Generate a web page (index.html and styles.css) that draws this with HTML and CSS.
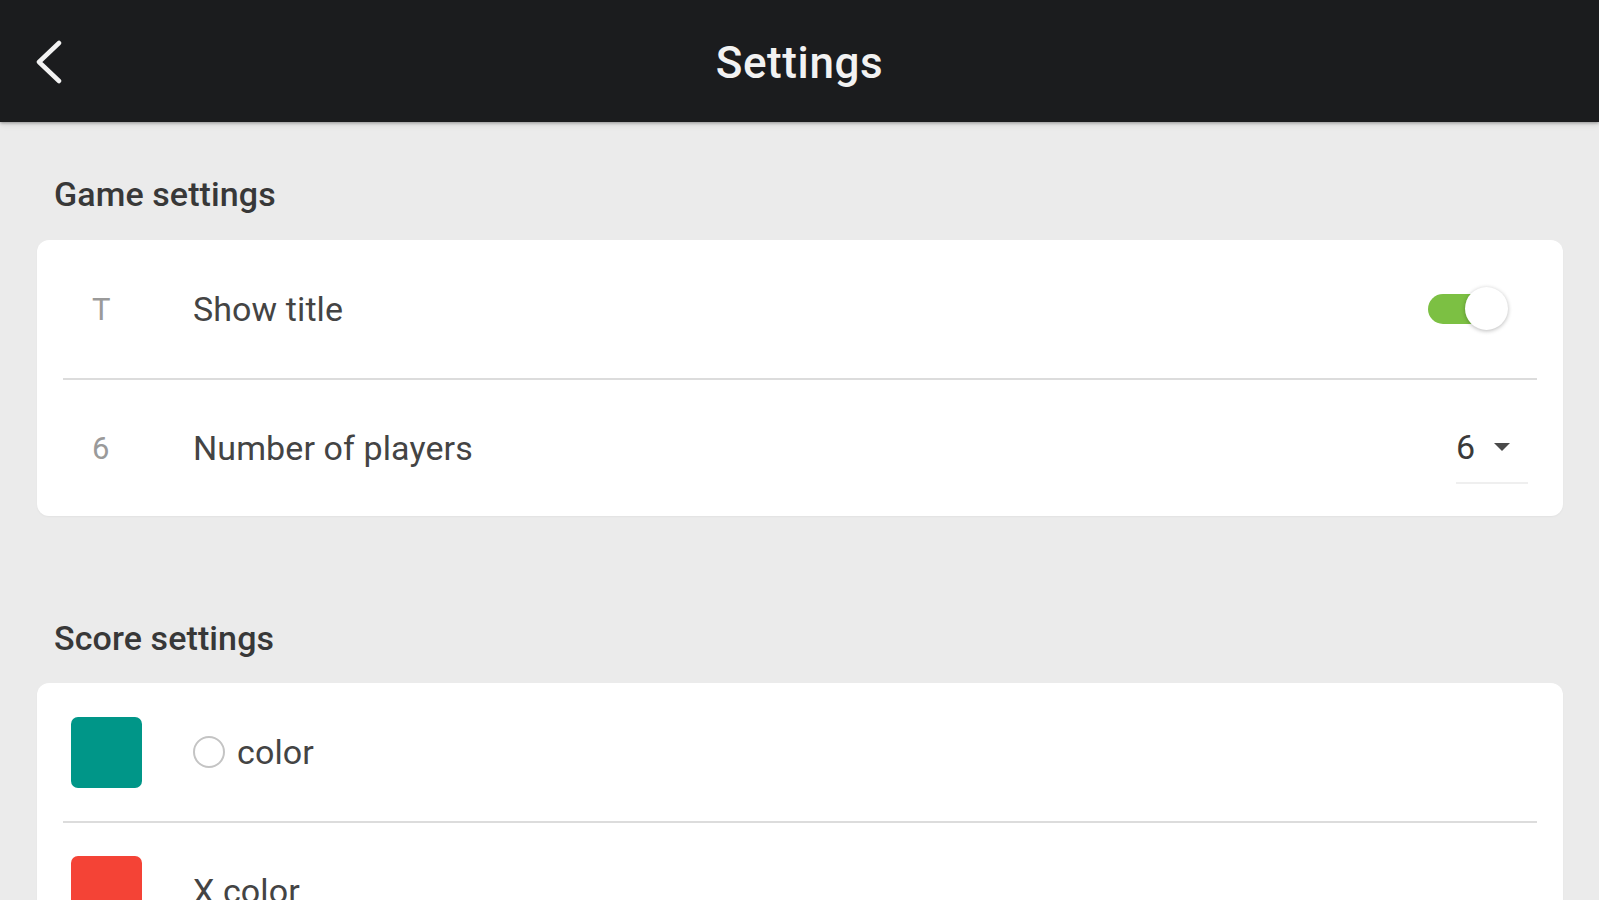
FILE: index.html
```html
<!DOCTYPE html>
<html lang="en">
<head>
<meta charset="utf-8">
<title>Settings</title>
<link rel="stylesheet" href="styles.css">
</head>
<body>
<header class="appbar">
  <div class="appbar-left">
    <svg class="back" width="30" height="44" viewBox="0 0 30 44" aria-hidden="true">
      <polyline points="25,3 5,22 25,41" fill="none" stroke="#f2f2f2" stroke-width="4.5" stroke-linecap="round" stroke-linejoin="round"/>
    </svg>
  </div>
  <h1 class="appbar-title">Settings</h1>
  <div class="appbar-right"></div>
</header>
<main class="content">
  <h2 class="section-title first">Game settings</h2>
  <div class="card">
    <div class="row">
      <div class="row-icon"><span class="icon-text">T</span></div>
      <div class="row-label">Show title</div>
      <div class="row-control">
        <div class="switch on"><div class="switch-track"></div><div class="switch-thumb"></div></div>
      </div>
    </div>
    <div class="row">
      <div class="row-icon"><span class="icon-text">6</span></div>
      <div class="row-label">Number of players</div>
      <div class="row-control">
        <div class="dropdown"><span class="dropdown-value">6</span><span class="dropdown-arrow"></span></div>
      </div>
    </div>
  </div>
  <h2 class="section-title">Score settings</h2>
  <div class="card">
    <div class="row">
      <div class="row-icon"><span class="swatch teal"></span></div>
      <div class="row-label"><span class="radio"></span>color</div>
    </div>
    <div class="row">
      <div class="row-icon"><span class="swatch red"></span></div>
      <div class="row-label">X color</div>
    </div>
  </div>
</main>
</body>
</html>
```

FILE: styles.css
```css
* { box-sizing: border-box; }
html, body {
  margin: 0;
  padding: 0;
  background: #ebebeb;
  font-family: Roboto, "Liberation Sans", Arial, sans-serif;
  overflow: hidden;
  height: 900px;
}
.appbar {
  height: 122px;
  background: #1b1c1e;
  display: grid;
  grid-template-columns: 1fr auto 1fr;
  align-items: center;
  box-shadow: 0 1px 3px rgba(0,0,0,0.35), 0 4px 6px rgba(0,0,0,0.06);
  position: relative;
  z-index: 1;
}
.appbar-left {
  padding-left: 34px;
  display: flex;
  align-items: center;
  padding-top: 2px;
}
.back { display: block; }
.appbar-title {
  margin: 0;
  color: #f2f2f2;
  font-size: 44px;
  font-weight: 500;
  letter-spacing: 0.6px;
  line-height: 1;
  padding-top: 4px;
}
.content {
  padding: 0 36px 0 37px;
}
.section-title {
  margin: 0;
  padding-left: 17px;
  font-size: 34px;
  font-weight: 500;
  color: #383838;
  line-height: 40px;
  margin-top: 102px;
  margin-bottom: 25px;
  letter-spacing: 0.1px;
}
.section-title.first {
  margin-top: 52px;
  margin-bottom: 26px;
}
.card {
  background: #fff;
  border-radius: 12px;
  padding: 0 26px;
  box-shadow: 0 1px 2px rgba(0,0,0,0.04);
}
.row {
  height: 138px;
  display: flex;
  align-items: center;
}
.row + .row {
  border-top: 2px solid #dcdcdc;
}
.row-icon {
  width: 130px;
  flex: none;
  display: flex;
  align-items: center;
}
.icon-text {
  padding-left: 29px;
  font-size: 31px;
  color: #9a9a9a;
}
.swatch {
  display: block;
  width: 71px;
  height: 71px;
  border-radius: 7px;
  margin-left: 8px;
}
.swatch.teal { background: #009688; }
.swatch.red { background: #f44336; }
.row-label {
  flex: 1;
  font-size: 34px;
  color: #444;
  display: flex;
  align-items: center;
  letter-spacing: 0.1px;
}
.radio {
  width: 32px;
  height: 32px;
  border: 2px solid #c4c4c4;
  border-radius: 50%;
  margin-right: 12px;
  flex: none;
}
.row-control {
  flex: none;
  display: flex;
  align-items: center;
}
.switch {
  position: relative;
  width: 80px;
  height: 44px;
  margin-right: 29px;
}
.switch-track {
  position: absolute;
  left: 0;
  top: 7px;
  width: 72px;
  height: 30px;
  border-radius: 15px;
  background: #7cc043;
}
.switch-thumb {
  position: absolute;
  right: 0;
  top: 0;
  width: 43px;
  height: 43px;
  border-radius: 50%;
  background: #fff;
  box-shadow: 0 1px 4px rgba(0,0,0,0.28);
}
.dropdown {
  display: flex;
  align-items: center;
  height: 72px;
  width: 72px;
  margin-right: 9px;
  border-bottom: 2px solid #efefef;
}
.dropdown-value {
  font-size: 34px;
  color: #3a3a3a;
  line-height: 1;
}
.dropdown-arrow {
  width: 0;
  height: 0;
  border-left: 8px solid transparent;
  border-right: 8px solid transparent;
  border-top: 8px solid #4a4a4a;
  margin-left: 19px;
}
```
